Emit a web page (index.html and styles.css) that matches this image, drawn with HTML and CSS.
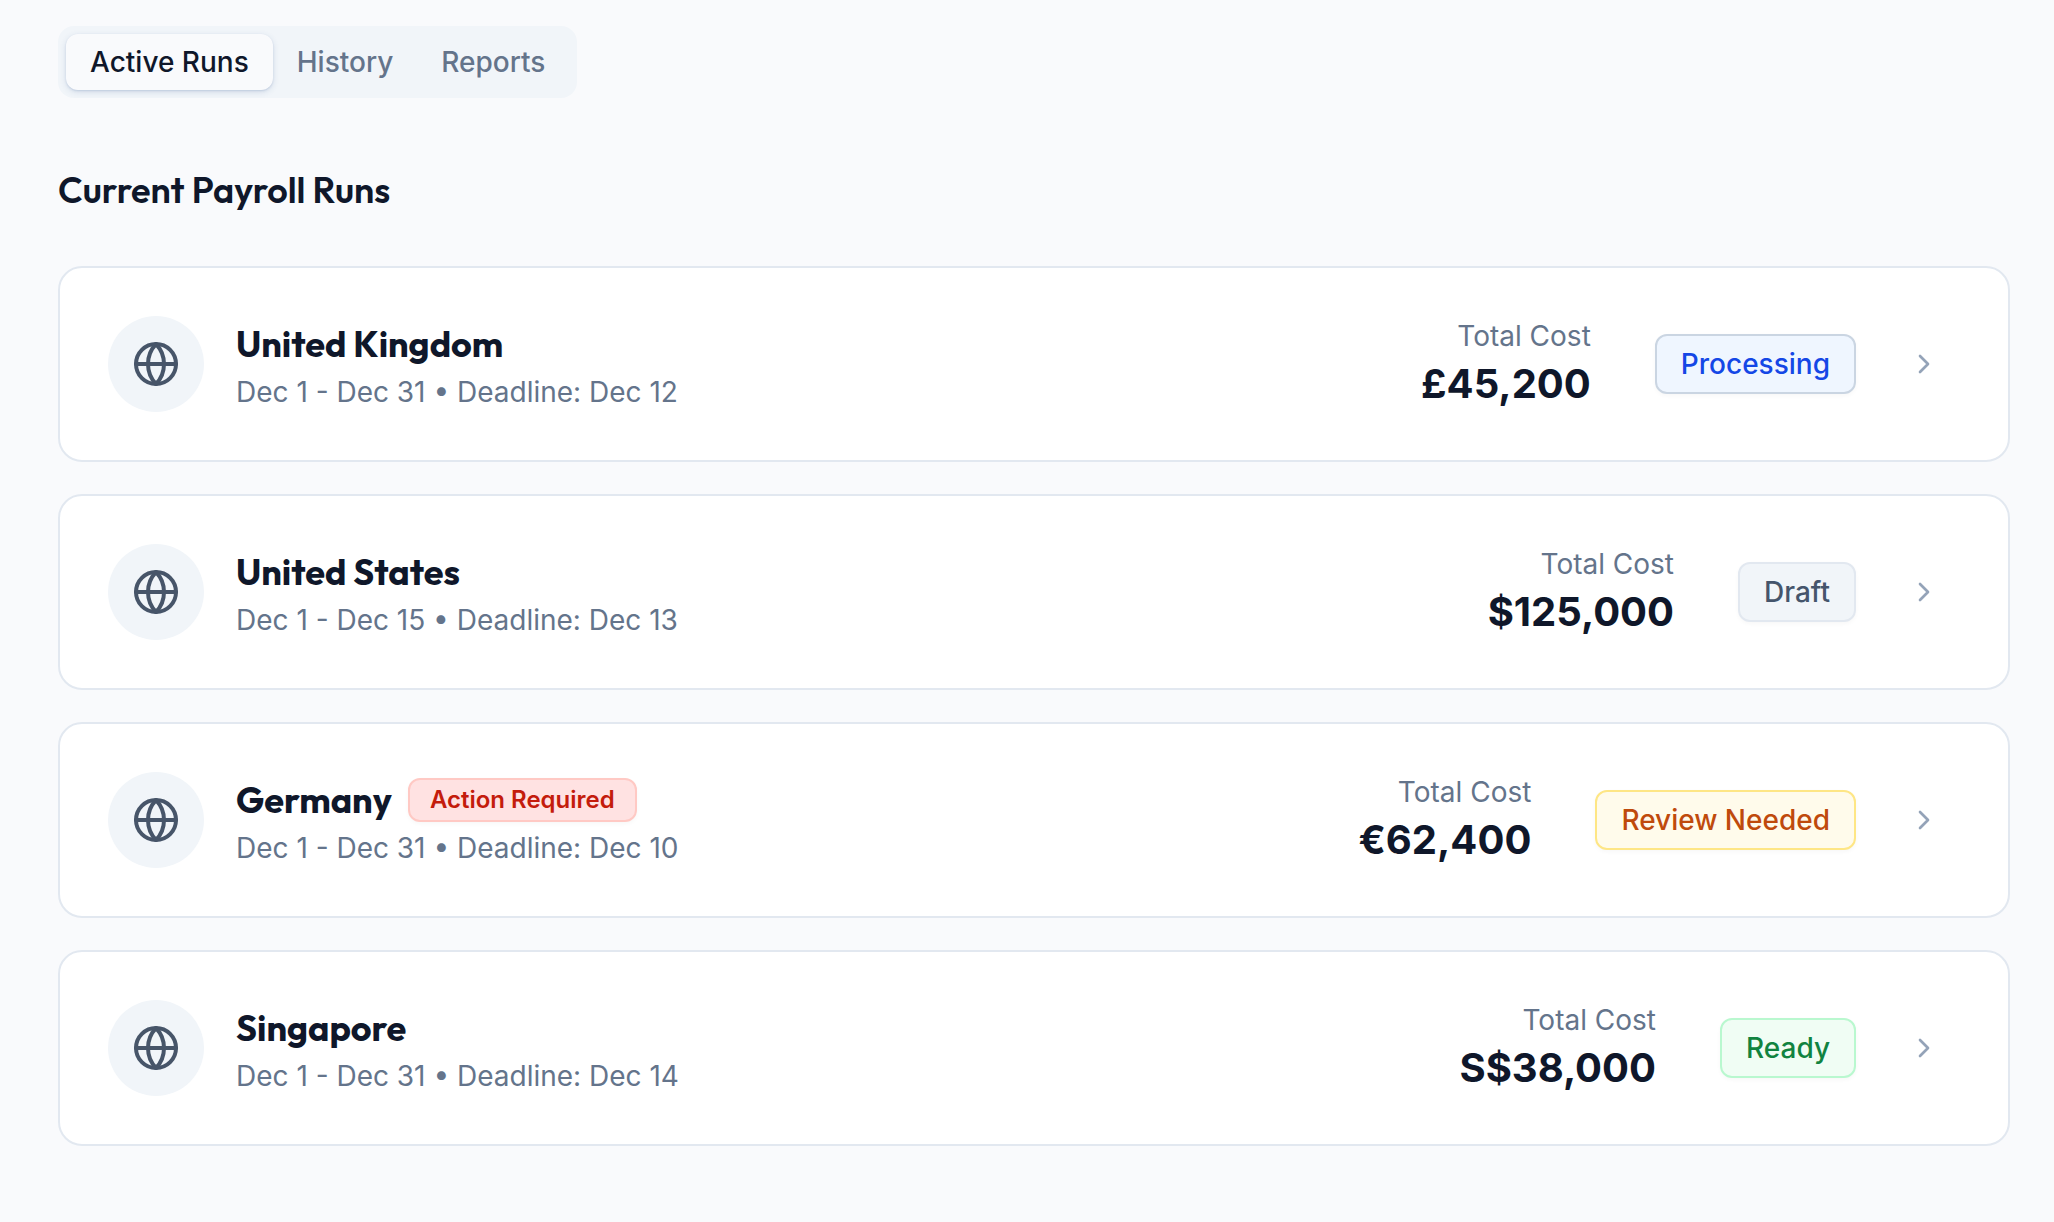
FILE: index.html
```html
<!DOCTYPE html>
<html lang="en">
<head>
    <meta charset="UTF-8">
    <meta name="viewport" content="width=device-width, initial-scale=1.0">
    <title>Payroll</title>
    <link rel="stylesheet" href="styles.css">
</head>
<body>
    <!-- Shared icons -->
    <svg class="sprite" aria-hidden="true">
        <symbol id="globe" viewBox="0 0 24 24">
            <circle cx="12" cy="12" r="10"/>
            <path d="M12 2a14.5 14.5 0 0 0 0 20 14.5 14.5 0 0 0 0-20"/>
            <path d="M2 12h20"/>
        </symbol>
        <symbol id="chevron" viewBox="0 0 24 24">
            <path d="m9 18 6-6-6-6"/>
        </symbol>
    </svg>
    <main class="page">
        <div class="tabs" role="tablist">
            <button class="tab active" type="button" role="tab" aria-selected="true">Active Runs</button>
            <button class="tab" type="button" role="tab" aria-selected="false">History</button>
            <button class="tab" type="button" role="tab" aria-selected="false">Reports</button>
        </div>
        <h1 class="heading">Current Payroll Runs</h1>
        <div class="runs">
            <article class="card">
                <div class="avatar"><svg class="icon-globe"><use href="#globe"/></svg></div>
                <div class="info">
                    <div class="title-row">
                        <h2 class="country">United Kingdom</h2>
                    </div>
                    <p class="muted">Dec 1 - Dec 31 • Deadline: Dec 12</p>
                </div>
                <div class="cost">
                    <p class="muted">Total Cost</p>
                    <p class="amount">£45,200</p>
                </div>
                <span class="badge processing">Processing</span>
                <button class="open" type="button" aria-label="Open United Kingdom"><svg class="icon-chevron"><use href="#chevron"/></svg></button>
            </article>
            <article class="card">
                <div class="avatar"><svg class="icon-globe"><use href="#globe"/></svg></div>
                <div class="info">
                    <div class="title-row">
                        <h2 class="country">United States</h2>
                    </div>
                    <p class="muted">Dec 1 - Dec 15 • Deadline: Dec 13</p>
                </div>
                <div class="cost">
                    <p class="muted">Total Cost</p>
                    <p class="amount">$125,000</p>
                </div>
                <span class="badge draft">Draft</span>
                <button class="open" type="button" aria-label="Open United States"><svg class="icon-chevron"><use href="#chevron"/></svg></button>
            </article>
            <article class="card">
                <div class="avatar"><svg class="icon-globe"><use href="#globe"/></svg></div>
                <div class="info">
                    <div class="title-row">
                        <h2 class="country">Germany</h2>
                        <span class="badge small action">Action Required</span>
                    </div>
                    <p class="muted">Dec 1 - Dec 31 • Deadline: Dec 10</p>
                </div>
                <div class="cost">
                    <p class="muted">Total Cost</p>
                    <p class="amount">€62,400</p>
                </div>
                <span class="badge review">Review Needed</span>
                <button class="open" type="button" aria-label="Open Germany"><svg class="icon-chevron"><use href="#chevron"/></svg></button>
            </article>
            <article class="card">
                <div class="avatar"><svg class="icon-globe"><use href="#globe"/></svg></div>
                <div class="info">
                    <div class="title-row">
                        <h2 class="country">Singapore</h2>
                    </div>
                    <p class="muted">Dec 1 - Dec 31 • Deadline: Dec 14</p>
                </div>
                <div class="cost">
                    <p class="muted">Total Cost</p>
                    <p class="amount">S$38,000</p>
                </div>
                <span class="badge ready">Ready</span>
                <button class="open" type="button" aria-label="Open Singapore"><svg class="icon-chevron"><use href="#chevron"/></svg></button>
            </article>
        </div>
    </main>
</body>
</html>
```
FILE: styles.css
```css
* {
    box-sizing: border-box;
}
body {
    margin: 0;
    background-color: #f9fafc;
    color: #0f172a;
    font-family: Inter, sans-serif;
    font-size: 28px;
    line-height: 40px;
}
h1, h2, p {
    margin: 0;
}
button {
    border: 0;
    background: none;
    font: inherit;
    cursor: pointer;
}
svg {
    display: block;
    fill: none;
    stroke: currentColor;
    stroke-width: 2;
    stroke-linecap: round;
    stroke-linejoin: round;
}
.sprite {
    display: none;
}
.page {
    padding: 26px 44px 76px 58px;
}
.tabs {
    display: inline-flex;
    padding: 8px;
    border-radius: 16px;
    background-color: #f1f5f9;
}
.tab {
    padding: 8px 24px;
    border-radius: 12px;
    color: #64748b;
    font-weight: 500;
}
.tab.active {
    background-color: #f9fafc;
    color: #0f172a;
    box-shadow: 0 2px 6px rgba(51, 90, 150, 0.16), 0 1px 2px rgba(51, 90, 150, 0.16);
}
.heading,
.country {
    font-family: Outfit, Lato, sans-serif;
    font-size: 36px;
    line-height: 56px;
    font-weight: 600;
}
.heading {
    margin: 64px 0 48px;
}
.country {
    font-weight: 700;
}
.runs {
    display: flex;
    flex-direction: column;
    gap: 32px;
}
.card {
    display: flex;
    align-items: center;
    padding: 48px;
    border: 2px solid #e2e8f0;
    border-radius: 24px;
    background-color: #fff;
}
.avatar {
    display: flex;
    align-items: center;
    justify-content: center;
    width: 96px;
    height: 96px;
    border-radius: 50%;
    background-color: #f1f5f9;
    color: #475569;
}
.icon-globe {
    width: 48px;
    height: 48px;
}
.info {
    flex: 1;
    margin-left: 32px;
}
.title-row {
    display: flex;
    align-items: center;
    gap: 16px;
}
.muted {
    color: #64748b;
}
.cost {
    margin-right: 64px;
    text-align: right;
}
.amount {
    font-size: 40px;
    line-height: 56px;
    font-weight: 700;
}
.badge {
    padding: 8px 24px;
    border: 2px solid;
    border-radius: 12px;
    font-weight: 500;
    box-shadow: 0 2px 4px rgba(15, 23, 42, 0.03);
}
.badge.small {
    padding: 4px 20px;
    font-size: 24px;
    line-height: 32px;
    font-weight: 600;
}
.processing {
    border-color: #cad5e2;
    background-color: #eff6ff;
    color: #1447e6;
}
.draft {
    border-color: #e2e8f0;
    background-color: #f1f5f9;
    color: #45556c;
}
.review {
    border-color: #fee685;
    background-color: #fffbeb;
    color: #bf4a0c;
}
.ready {
    border-color: #b9f8cf;
    background-color: #f0fdf4;
    color: #118340;
}
.action {
    border-color: #ffc9c4;
    background-color: #ffe2e2;
    color: #c41c0c;
}
.open {
    margin-left: 32px;
    padding: 20px;
    border-radius: 12px;
    color: #94a3b8;
}
.open:hover {
    background-color: #f1f5f9;
}
.icon-chevron {
    width: 32px;
    height: 32px;
}
```
